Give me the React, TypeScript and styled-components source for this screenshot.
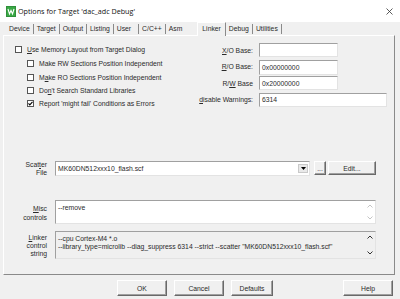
import React from 'react';
import styled, { createGlobalStyle } from 'styled-components';

const GlobalStyle = createGlobalStyle`
    html, body {
        margin: 0;
        padding: 0;
        background: #f0f0f0;
    }
`;

const Window = styled.div`
    width: 400px;
    height: 299px;
    display: flex;
    flex-direction: column;
    background: #f0f0f0;
    font-family: "Liberation Sans", Arial, sans-serif;
    font-size: 6.8px;
    color: #2a2a2a;
    overflow: hidden;
`;

const TitleBar = styled.div`
    height: 22px;
    flex: none;
    display: flex;
    align-items: center;
    padding-left: 6px;
    background: #fff;
`;

const TitleText = styled.span`
    margin-left: 2px;
    font-family: "Open Sans", "Liberation Sans", sans-serif;
    font-size: 7.2px;
    color: #111;
`;

const CloseButton = styled.div`
    margin-left: auto;
    margin-right: 7px;
    display: flex;
`;

const TabStrip = styled.div`
    height: 12px;
    margin-top: 1px;
    flex: none;
    display: flex;
    align-items: flex-end;
    padding-left: 5px;
    position: relative;
    z-index: 1;
`;

const Tab = styled.div<{ $active?: boolean; $wide?: number; $last?: boolean }>`
    height: ${p => (p.$active ? 12 : 10)}px;
    line-height: 10px;
    padding: 0 ${p => p.$wide ?? 3}px 0 3px;
    white-space: nowrap;
    border-right: ${p => (p.$last ? 'none' : '1px solid #8a8a8a')};
    margin-bottom: ${p => (p.$active ? -1 : 1)}px;
    ${p => p.$active && `
        background: #f0f0f0;
        border-left: 1px solid #fff;
        border-top: 1px solid #fff;
        border-right: 1px solid #8a8a8a;
        padding: 1px 4px 0 4px;
        margin-left: 12px;
    `}
    &:first-child {
        padding-left: 4px;
    }
`;

const Panel = styled.div`
    height: 240px;
    margin: 0 5px 0 3px;
    flex: none;
    display: flex;
    flex-direction: column;
    border: 1px solid;
    border-color: #fff #8a8a8a #8a8a8a #fff;
    box-sizing: border-box;
`;

const TopSection = styled.div`
    height: 74px;
    flex: none;
    display: flex;
    padding: 7px 7px 0 11px;
    box-sizing: border-box;
`;

const CheckList = styled.div`
    display: flex;
    flex-direction: column;
`;

const CheckRow = styled.label<{ $indent?: boolean; $first?: boolean }>`
    height: 13.5px;
    display: flex;
    align-items: center;
    gap: 5px;
    margin-left: ${p => (p.$indent ? 12 : 0)}px;
    margin-bottom: ${p => (p.$first ? 1 : 0)}px;
    white-space: nowrap;
`;

const Box = styled.span`
    width: 7px;
    height: 7px;
    flex: none;
    box-sizing: border-box;
    border: 1px solid #555;
    background: #fff;
    display: flex;
    align-items: center;
    justify-content: center;
`;

const AddressGrid = styled.div`
    margin-left: auto;
    display: grid;
    grid-template-columns: 55px 128px;
    grid-auto-rows: 14px;
    column-gap: 6px;
    row-gap: 2.5px;
`;

const GridLabel = styled.span`
    justify-self: end;
    align-self: center;
    white-space: nowrap;
`;

const Edit = styled.div<{ $width?: number; $height?: number; $readOnly?: boolean }>`
    width: ${p => (p.$width ? `${p.$width}px` : '100%')};
    height: ${p => p.$height ?? 14}px;
    box-sizing: border-box;
    border: 1px solid;
    border-color: #a0a0a0 #e3e3e3 #e3e3e3 #a0a0a0;
    background: ${p => (p.$readOnly ? '#f0f0f0' : '#fff')};
    display: flex;
    align-items: center;
    padding-left: 2px;
    white-space: nowrap;
    overflow: hidden;
`;

const FieldRow = styled.div<{ $top: number }>`
    display: flex;
    align-items: flex-start;
    gap: 8px;
    margin-top: ${p => p.$top}px;
`;

const FieldLabel = styled.div<{ $pad: number; $line: number }>`
    width: 43px;
    flex: none;
    text-align: right;
    line-height: ${p => p.$line}px;
    padding-top: ${p => p.$pad}px;
`;

const Combo = styled.div`
    width: 255px;
    height: 15px;
    box-sizing: border-box;
    border: 1px solid;
    border-color: #a0a0a0 #e3e3e3 #e3e3e3 #a0a0a0;
    background: #fff;
    display: flex;
    align-items: center;
    padding-left: 2px;
`;

const ComboArrow = styled.div`
    margin-left: auto;
    margin-right: 1px;
    width: 10px;
    height: 9px;
    background: #e9e9e9;
    border: 1px solid #c9c9c9;
    box-sizing: border-box;
    display: flex;
    align-items: center;
    justify-content: center;
`;

const Button = styled.button<{ $width: number; $height?: number }>`
    width: ${p => p.$width}px;
    height: ${p => p.$height ?? 16}px;
    padding: 0;
    flex: none;
    font-family: inherit;
    font-size: 6.8px;
    color: #2a2a2a;
    background: #f0f0f0;
    border: 1px solid;
    border-color: #fff #696969 #696969 #fff;
    box-shadow: inset -1px -1px 0 #a0a0a0;
    box-sizing: border-box;
`;

const TextBox = styled.div<{ $height: number; $readOnly?: boolean }>`
    width: 321px;
    height: ${p => p.$height}px;
    box-sizing: border-box;
    border: 1px solid;
    border-color: #a0a0a0 #e3e3e3 #e3e3e3 #a0a0a0;
    background: ${p => (p.$readOnly ? '#f0f0f0' : '#fff')};
    display: flex;
`;

const TextLines = styled.div<{ $pad: number; $line: number }>`
    flex: 1;
    padding: ${p => p.$pad}px 0 0 2px;
    line-height: ${p => p.$line}px;
    white-space: nowrap;
    overflow: hidden;
`;

const ScrollBar = styled.div`
    width: 10px;
    flex: none;
    display: flex;
    flex-direction: column;
    justify-content: space-between;
    align-items: center;
    padding: 3px 0;
`;

const Footer = styled.div`
    flex: 1;
    display: flex;
    align-items: flex-start;
    gap: 7px;
    padding: 5px 7px 0 117px;
`;

const Spacer = styled.div`
    flex: 1;
`;

const Chevron = ({ up, color }: { up?: boolean; color: string }) => (
    <svg width="6" height="4" viewBox="0 0 6 4">
        <polyline
            points={up ? '0.5,3.5 3,1 5.5,3.5' : '0.5,0.5 3,3 5.5,0.5'}
            fill="none"
            stroke={color}
            strokeWidth="1"
        />
    </svg>
);

const CheckBox = ({ checked, children, indent, first }: { checked?: boolean; children: React.ReactNode; indent?: boolean; first?: boolean }) => (
    <CheckRow $indent={indent} $first={first}>
        <Box>
            {checked && (
                <svg width="5" height="5" viewBox="0 0 5 5">
                    <polyline points="0.5,2.3 1.8,3.8 4.5,0.8" fill="none" stroke="#000" strokeWidth="1.1" />
                </svg>
            )}
        </Box>
        <span>{children}</span>
    </CheckRow>
);

const tabs = ['Device', 'Target', 'Output', 'Listing', 'User', 'C/C++', 'Asm', 'Linker', 'Debug', 'Utilities'];

const App: React.FC = () => {
    return (
        <Window>
            <GlobalStyle />
            <TitleBar>
                <svg width="10" height="11" viewBox="0 0 10 11">
                    <rect x="0" y="0" width="10" height="11" fill="#2f8f3a" />
                    <rect x="1" y="1" width="8" height="9" fill="#3aa845" />
                    <polyline points="2,3 3.5,8 5,4.5 6.5,8 8,3" fill="none" stroke="#fff" strokeWidth="1.1" />
                </svg>
                <TitleText>Options for Target 'dac_adc Debug'</TitleText>
                <CloseButton>
                    <svg width="7" height="7" viewBox="0 0 7 7">
                        <path d="M0.5 0.5 L6.5 6.5 M6.5 0.5 L0.5 6.5" stroke="#333" strokeWidth="0.8" />
                    </svg>
                </CloseButton>
            </TitleBar>

            <TabStrip>
                {tabs.map(name => (
                    <Tab
                        key={name}
                        $active={name === 'Linker'}
                        $wide={name === 'User' ? 7 : undefined}
                        $last={name === 'Asm'}
                    >
                        {name}
                    </Tab>
                ))}
            </TabStrip>

            <Panel>
                <TopSection>
                    <CheckList>
                        <CheckBox first><u>U</u>se Memory Layout from Target Dialog</CheckBox>
                        <CheckBox indent>Make RW Sections Position Independent</CheckBox>
                        <CheckBox indent>M<u>a</u>ke RO Sections Position Independent</CheckBox>
                        <CheckBox indent>Do<u>n</u>'t Search Standard Libraries</CheckBox>
                        <CheckBox indent checked>Report 'might fail' Conditions as Errors</CheckBox>
                    </CheckList>
                    <AddressGrid>
                        <GridLabel><u>X</u>/O Base:</GridLabel>
                        <Edit $width={79} />
                        <GridLabel><u>R</u>/O Base:</GridLabel>
                        <Edit $width={79} $height={15}>0x00000000</Edit>
                        <GridLabel>R/<u>W</u> Base</GridLabel>
                        <Edit $width={79}>0x20000000</Edit>
                        <GridLabel><u>d</u>isable Warnings:</GridLabel>
                        <Edit>6314</Edit>
                    </AddressGrid>
                </TopSection>

                <FieldRow $top={51}>
                    <FieldLabel $pad={0} $line={8}>Scat<u>t</u>er<br />File</FieldLabel>
                    <Combo>
                        MK60DN512xxx10_flash.scf
                        <ComboArrow>
                            <svg width="5" height="3" viewBox="0 0 5 3">
                                <polygon points="0,0 5,0 2.5,3" fill="#000" />
                            </svg>
                        </ComboArrow>
                    </Combo>
                    <Button $width={12} $height={14} style={{ marginLeft: -4 }}>...</Button>
                    <Button $width={48} $height={14} style={{ marginLeft: -6 }}>Edit...</Button>
                </FieldRow>

                <FieldRow $top={23}>
                    <FieldLabel $pad={4} $line={9}><u>M</u>isc<br />controls</FieldLabel>
                    <TextBox $height={24}>
                        <TextLines $pad={2} $line={9}>--remove</TextLines>
                        <ScrollBar>
                            <Chevron up color="#c4c4c4" />
                            <Chevron color="#c4c4c4" />
                        </ScrollBar>
                    </TextBox>
                </FieldRow>

                <FieldRow $top={7}>
                    <FieldLabel $pad={3} $line={8}><u>L</u>inker<br />control<br />string</FieldLabel>
                    <TextBox $height={28} $readOnly>
                        <TextLines $pad={3} $line={8}>
                            --cpu Cortex-M4 *.o<br />
                            --library_type=microlib --diag_suppress 6314 --strict --scatter "MK60DN512xxx10_flash.scf"
                        </TextLines>
                        <ScrollBar>
                            <Chevron up color="#333" />
                            <Chevron color="#333" />
                        </ScrollBar>
                    </TextBox>
                </FieldRow>
            </Panel>

            <Footer>
                <Button $width={50}>OK</Button>
                <Button $width={50}>Cancel</Button>
                <Button $width={42}>Defaults</Button>
                <Spacer />
                <Button $width={50}>Help</Button>
            </Footer>
        </Window>
    );
};

export default App;
